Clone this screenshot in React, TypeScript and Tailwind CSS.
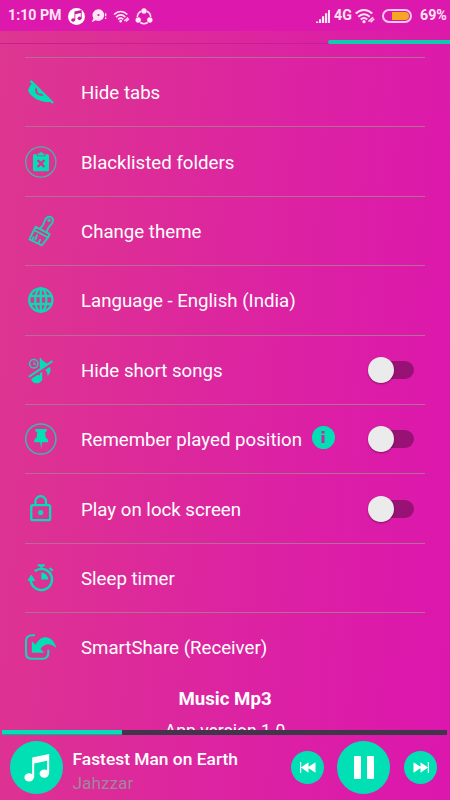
import React, { useState } from 'react';
import clsx from 'clsx';

const ACCENT = '#00e0b4';

const MusicNote = ({ className }: { className?: string }) => (
  <svg viewBox="0 0 26 28" className={className} fill="currentColor">
    <path d="M8.2 3.6 25.2 0v19.3h-2.1V6.8L10.2 9.6v14h-2z" />
    <ellipse cx="5.1" cy="23.4" rx="4.7" ry="4.2" />
    <ellipse cx="20.3" cy="19.6" rx="4.7" ry="4.2" />
  </svg>
);

const HideTabsIcon = () => (
  <svg viewBox="0 0 32 32" className="w-8 h-8">
    <path d="M7 7.500 26 26C17 26.500 7 23.500 3 14.500 4 11.500 5 9.500 7 7.500z" fill={ACCENT} />
    <path d="M11.600 11.800c-1.800 4.500 1.800 8 6.600 6.700" fill="none" stroke="#dd2f95" strokeWidth="1.900" />
    <path d="M5.500 4.800 28 27" stroke={ACCENT} strokeWidth="2.400" />
  </svg>
);

const BlacklistIcon = () => (
  <svg viewBox="0 0 32 32" className="w-8 h-8">
    <circle cx="15.800" cy="16" r="15.100" fill="none" stroke="#4fb0a5" strokeWidth="1.300" />
    <path d="M9.400 8.200h2.400v2.100h8.400V8.200h2.400c.8 0 1.400.6 1.400 1.400v14.200c0 .8-.6 1.400-1.400 1.400H9.400c-.8 0-1.400-.6-1.400-1.400V9.600c0-.8.6-1.400 1.400-1.400z" fill={ACCENT} />
    <path d="M12.600 9.400V7.600h1.600a1.850 1.850 0 0 1 3.600 0h1.600v1.800z" fill={ACCENT} />
    <path d="m12.600 14 6.800 7m0-7-6.800 7" stroke="#dd2f95" strokeWidth="2.500" />
  </svg>
);

const BrushIcon = () => (
  <svg viewBox="0 0 32 32" className="w-8 h-8" fill="none" stroke="#20cfb0" strokeWidth="1.900" strokeLinejoin="round" strokeLinecap="round">
    <path d="m10.800 11.800 13.800 7.400-1.700 3.300L9 15z" />
    <path d="m9 15-4.600 9.300L17 30.300l5.900-7.800" />
    <path d="m15.600 13.200 1.600-2c1.400-1.600 1.600-3.600 2.800-6 1.300-2.700 3.600-4.300 6-3.100 2.600 1.300 2.400 4 .9 6.300-1.500 2.200-3.300 3.300-3.900 5.300l-1 2.500" />
    <path d="m10.300 24.500 1.700-4.300m1.600 7.600 1.600-3M7.600 24.500l.9-2.300" />
    <circle cx="24.100" cy="5.300" r=".8" />
  </svg>
);

const GlobeIcon = () => (
  <svg viewBox="0 0 32 32" className="w-8 h-8" fill="none" stroke="#0cd9b2" strokeWidth="2.300">
    <circle cx="15.800" cy="16" r="11.600" />
    <ellipse cx="15.800" cy="16" rx="5.600" ry="11.600" />
    <path d="M15.800 4.500v23M5.500 12h20.800M5.500 20h20.800" />
  </svg>
);

const ShortSongsIcon = () => (
  <svg viewBox="0 0 32 32" className="w-8 h-8">
    <circle cx="8.800" cy="9.800" r="4.200" fill="none" stroke="#20cfb0" strokeWidth="1.500" />
    <path d="M9 7.600v2.500h2" fill="none" stroke="#20cfb0" strokeWidth="1.100" />
    <path d="M14.800 2.800c1.700 3.900 6 5.400 9 8.700 2.600 3 2.400 6.600-1.200 10.500-.2-4-1.500-6.500-5.400-8v12h-2.400z" fill={ACCENT} />
    <ellipse cx="11.700" cy="25" rx="5.500" ry="4.200" fill={ACCENT} />
    <path d="M4.200 24 28.200 8.300" stroke="#dd2f95" strokeWidth="3.800" />
    <path d="M3.800 22.900 27.500 7.200" stroke="#12d6b2" strokeWidth="2.100" />
  </svg>
);

const PinIcon = () => (
  <svg viewBox="0 0 32 32" className="w-8 h-8">
    <circle cx="15.800" cy="16" r="15.100" fill="none" stroke="#30beab" strokeWidth="1.500" />
    <path d="M11.500 6h9.200c.9 0 1.300.6 1.300 1.300 0 1-.7 1.500-1.900 1.700l.5 5.600c1.700.8 2.700 2.200 2.700 4.700h-6.200l-.9 7-1-7H9c0-2.500 1-3.900 2.700-4.700l.5-5.600c-1.300-.2-2-.7-2-1.700 0-.7.500-1.300 1.300-1.300z" fill={ACCENT} />
  </svg>
);

const LockIcon = () => (
  <svg viewBox="0 0 32 32" className="w-8 h-8" fill="none" stroke={ACCENT} strokeWidth="2.300">
    <rect x="6.300" y="12.200" width="18.800" height="15" rx="1.500" />
    <path d="M10.400 12.200V8.500a5.300 5.300 0 0 1 10.600 0v3.700" />
    <circle cx="15.700" cy="19.600" r="2.600" fill={ACCENT} stroke="none" />
  </svg>
);

const TimerIcon = () => (
  <svg viewBox="0 0 32 32" className="w-8 h-8" fill="none" stroke={ACCENT} strokeWidth="2.400">
    <path d="M9.800 9.200a10.600 10.600 0 1 1-4 9" />
    <path d="M12.800 3.400h7M16.400 3.400v3.600" strokeWidth="2.300" />
    <path d="m24.700 6 2.800 2.800" strokeWidth="2.300" />
    <path d="M16.300 10.600a7 7 0 0 1 7 7h-7z" fill={ACCENT} stroke="none" />
    <path d="m6.300 13.200 3.400 5.300H3z" fill={ACCENT} stroke={ACCENT} strokeWidth="1" />
  </svg>
);

const ShareIcon = () => (
  <svg viewBox="0 0 32 32" className="w-8 h-8">
    <path d="M10 4.300H7.200c-4 0-6.200 2-6.200 6v11.500c0 4 2 6 6 6h10.300c4 0 6-2 6-6v-3" fill="none" stroke="#12d6b2" strokeWidth="2.100" />
    <path d="M6.800 10v11.800h12.400l-3.700-4c4.300-5.500 9.500-6.300 16-.5C29.300 9 24.500 5.600 19.500 6.200c-3.600.4-6.700 3.200-9 7.500z" fill={ACCENT} />
  </svg>
);

interface SettingRow {
  label: string;
  Icon: () => React.JSX.Element;
  toggle?: boolean;
  info?: boolean;
}

const rows: SettingRow[] = [
  { label: 'Hide tabs', Icon: HideTabsIcon },
  { label: 'Blacklisted folders', Icon: BlacklistIcon },
  { label: 'Change theme', Icon: BrushIcon },
  { label: 'Language - English (India)', Icon: GlobeIcon },
  { label: 'Hide short songs', Icon: ShortSongsIcon, toggle: true },
  { label: 'Remember played position', Icon: PinIcon, toggle: true, info: true },
  { label: 'Play on lock screen', Icon: LockIcon, toggle: true },
  { label: 'Sleep timer', Icon: TimerIcon },
  { label: 'SmartShare (Receiver)', Icon: ShareIcon },
];

const Toggle = ({ on, onChange }: { on: boolean; onChange: () => void }) => (
  <button onClick={onChange} className="flex items-center w-[46px] h-[26px] mr-[10.500px]">
    <span className="flex items-center w-[41px] h-[18px] ml-1 rounded-full bg-[#981275]">
      <span
        className={clsx(
          'w-[26px] h-[26px] shrink-0 rounded-full bg-[#ebebeb] shadow-[0_1px_2px_rgba(0,0,0,0.4)]',
          on ? 'ml-[17px]' : '-ml-[5px]'
        )}
      />
    </span>
  </button>
);

const Wifi = ({ className }: { className?: string }) => (
  <svg viewBox="0 0 20 16" className={className} fill="none" stroke="currentColor" strokeWidth="2">
    <path d="M.8 5.500c5-4.700 11.400-4.700 16.400 0M3.300 8.700c3.500-3.200 7.900-3.200 11.400 0M5.800 11.500c2-1.800 4.400-1.800 6.400 0" />
    <circle cx="9" cy="13.700" r="1.600" fill="currentColor" stroke="none" />
    <path d="m13.500 13.500 4.500-4.200M15.600 14.300l3.600-3.500" strokeWidth="1.500" />
  </svg>
);

const StatusBar = () => (
  <div className="flex items-center h-[31px] shrink-0 bg-[#dd18ac] pl-2 pr-[3px] pt-px text-[#ffe6f7] text-[14.200px] font-bold">
    <span className="w-[54px] whitespace-nowrap">1:10 PM</span>
    <span className="flex items-center justify-center w-[17px] h-[17px] ml-[6px] rounded-full bg-white text-[#c818a0]">
      <MusicNote className="w-[11px] h-[12px] -ml-px" />
    </span>
    <svg viewBox="0 0 16 14" className="w-4 h-[14px] ml-[6px] -mt-px" fill="currentColor">
      <path fillRule="evenodd" d="M7.500.3a5.800 5.800 0 1 1-2.700 11L.7 13.200l1.700-4A5.800 5.800 0 0 1 7.500.3zm0 4.700a1.100 1.100 0 1 0 0 2.200 1.100 1.100 0 0 0 0-2.200z" />
      <path d="M14 4.200h1.300v3H14zM14 8.500h1.300v1.400H14z" />
    </svg>
    <Wifi className="w-[17px] h-[13px] ml-[6px]" />
    <svg viewBox="0 0 18 17" className="w-[18px] h-[17px] ml-[5px]" fill="none" stroke="currentColor" strokeWidth="1.500">
      <path d="M6.300 3.300A6.500 6.500 0 0 0 2.300 9M11.700 3.300a6.500 6.500 0 0 1 4 5.700M5.300 14.500c2.300 1.500 5.100 1.500 7.400 0" />
      <g fill="currentColor" stroke="none">
        <circle cx="9" cy="3" r="2.700" />
        <circle cx="3.200" cy="12" r="2.700" />
        <circle cx="14.800" cy="12" r="2.700" />
      </g>
    </svg>
    <svg viewBox="0 0 14 13" className="w-[14px] h-[13px] ml-auto" fill="currentColor">
      <path d="M0 11.500h2.200V13H0zM3 9.200h2.200V13H3zM6 6.200h2.200V13H6zM9 3.200h2.200V13H9zM12 0h2v13h-2z" />
    </svg>
    <span className="ml-[4px] w-[17px] whitespace-nowrap">4G</span>
    <Wifi className="w-5 h-4 ml-[4px]" />
    <span className="flex justify-end w-[30px] h-[14px] -mt-px ml-[7px] p-px rounded-full border-2 border-[#ffc9f1]">
      <span className="w-[17px] h-full rounded-r-full bg-[#f5a623]" />
    </span>
    <span className="ml-[8px] w-[27px] whitespace-nowrap">69%</span>
  </div>
);

const Player = () => {
  const [playing, setPlaying] = useState(true);

  return (
    <div className="shrink-0 h-[70px]">
      <div className="h-[5px] ml-[2px] mr-[3px] bg-[#413649]">
        <div className="h-full w-[120px] bg-[#00e0b4] border-b border-[#14a895]" />
      </div>
      <div className="flex items-center h-[65px] pl-[10px] pr-[13px]">
        <div className="flex items-center justify-center w-[53px] h-[53px] shrink-0 rounded-full bg-[#00e0b4] text-white">
          <MusicNote className="w-[26px] h-[28px]" />
        </div>
        <div className="ml-[9.500px] w-[190px] pt-[7px]">
          <div className="text-white text-[17.400px] leading-6 font-medium whitespace-nowrap">Fastest Man on Earth</div>
          <div className="text-[#a1879b] text-[17.300px] leading-6">Jahzzar</div>
        </div>
        <div className="flex items-center ml-auto text-white">
          <button className="flex items-center justify-center w-[33px] h-[33px] rounded-full bg-[#00e0b4]">
            <svg viewBox="0 0 16 11" className="w-4 h-[11px]" fill="currentColor">
              <path d="M0 0h1.200v11H0zM8.500.3v10.400L1 5.500zM15.500.3v10.400L7.500 5.500z" />
            </svg>
          </button>
          <button onClick={() => setPlaying(!playing)} className="flex items-center justify-center gap-[6px] w-[53px] h-[53px] ml-[13px] rounded-full bg-[#00e0b4]">
            <span className="w-[7px] h-[23px] rounded-[1px] bg-white" />
            <span className="w-[7px] h-[23px] rounded-[1px] bg-white" />
          </button>
          <button className="flex items-center justify-center w-[33px] h-[33px] ml-[14px] rounded-full bg-[#00e0b4]">
            <svg viewBox="0 0 16 11" className="w-4 h-[11px]" fill="currentColor">
              <path d="M14.800 0H16v11h-1.200zM7.500.3v10.400L15 5.500zM.5.3v10.400L8.500 5.500z" />
            </svg>
          </button>
        </div>
      </div>
    </div>
  );
};

export default function App() {
  const [toggles, setToggles] = useState<Record<string, boolean>>({});

  return (
    <div className="flex flex-col w-[450px] h-[800px] overflow-hidden font-['Roboto',sans-serif] bg-[linear-gradient(95deg,#dd3790_0%,#dd2c98_30%,#dc22a3_60%,#dc16ae_100%)]">
      <StatusBar />

      {/* Tab strip */}
      <div className="flex items-end justify-end h-[13px] shrink-0 border-b border-[#c02391]">
        <div className="w-[122px] h-[4px] -mb-px rounded-l-full bg-[#10c9ae]" />
      </div>

      <div className="flex-1 min-h-0 overflow-hidden pt-[13px] px-[25px]">
        {rows.map(({ label, Icon, toggle, info }) => (
          <div key={label} className="flex items-center h-[69.400px] border-t border-[#b76c98]">
            <Icon />
            <span className="ml-[24px] pt-[2px] text-white text-[18.670px] whitespace-nowrap">{label}</span>
            {info && (
              <span className="flex items-center justify-center w-[23px] h-[23px] ml-[10px] -mt-1 rounded-full bg-[#00e0b4]">
                <svg viewBox="0 0 4 12" className="w-1 h-3" fill="#c92b9c">
                  <path d="M.5 0h3v2.500h-3zM.5 4h3v8h-3z" />
                </svg>
              </span>
            )}
            {toggle && (
              <div className="ml-auto">
                <Toggle on={!!toggles[label]} onChange={() => setToggles(prev => ({ ...prev, [label]: !prev[label] }))} />
              </div>
            )}
          </div>
        ))}
        <div className="flex flex-col items-center pt-[5px] text-white">
          <div className="text-[18.670px] leading-6 font-bold">Music Mp3</div>
          <div className="mt-[8px] text-[17.500px] leading-6">App version 1.0</div>
        </div>
      </div>

      <Player />
    </div>
  );
}
